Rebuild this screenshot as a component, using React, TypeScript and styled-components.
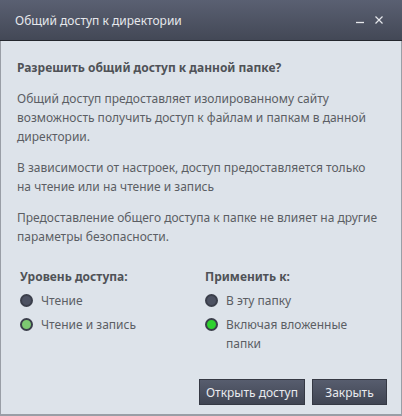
import styled, { createGlobalStyle } from 'styled-components';

const GlobalStyle = createGlobalStyle`
  html, body {
    margin: 0;
    padding: 0;
    background: #dde3ea;
  }
  * {
    box-sizing: border-box;
  }
`;

const Window = styled.div`
  width: 402px;
  height: 416px;
  display: flex;
  flex-direction: column;
  font-family: "Noto Sans", "Open Sans", sans-serif;
  font-size: 12px;
  background: #dde3ea;
  border: 1px solid #999ea6;
  border-top: none;
  border-bottom-width: 2px;
`;

const TitleBar = styled.div`
  height: 41px;
  flex: none;
  display: flex;
  align-items: center;
  padding: 0 19px 0 15px;
  margin: 0 -1px;
  background: linear-gradient(#5a6072, #434856);
  border-bottom: 1px solid #24272e;
  color: #e6e8ec;
`;

const Title = styled.div`
  flex: 1;
  font-size: 12px;
`;

const Controls = styled.div`
  display: flex;
  align-items: center;
  gap: 11px;
`;

const Body = styled.div`
  flex: 1;
  display: flex;
  flex-direction: column;
  padding: 17px 18px 0 16px;
  color: #5b5e64;
`;

const Heading = styled.div`
  font-weight: 700;
  color: #4f5257;
  line-height: 19px;
`;

const Para = styled.p`
  margin: 12px 0 0;
  line-height: 19px;
`;

const Options = styled.div`
  display: grid;
  grid-template-columns: 185px 165px;
  padding-left: 3px;
  margin-top: 21px;
`;

const Column = styled.div`
  display: flex;
  flex-direction: column;
`;

const Label = styled.div`
  font-weight: 700;
  color: #4f5257;
  line-height: 19px;
  margin-bottom: 5px;
`;

const Option = styled.div`
  display: flex;
  align-items: flex-start;
  gap: 8px;
  line-height: 19px;
  margin-bottom: 5px;
  padding-right: 20px;
`;

const Radio = styled.span<{ $on?: string }>`
  flex: none;
  width: 13px;
  height: 13px;
  margin-top: 3px;
  border-radius: 50%;
  border: 2px solid #3b3f4b;
  background: ${(p) => p.$on ?? '#4d5262'};
`;

const Footer = styled.div`
  margin-top: auto;
  display: flex;
  justify-content: flex-end;
  gap: 7px;
  padding: 0 14px 9px 0;
`;

const Button = styled.button`
  height: 26px;
  min-width: 75px;
  padding: 0 6px;
  font-family: inherit;
  font-size: 12px;
  color: #e8eaee;
  background: linear-gradient(#575d6e, #404553);
  border: 1px solid #353944;
  border-radius: 0;
`;

function App(): JSX.Element {
  return (
    <>
      <GlobalStyle />
      <Window>
        <TitleBar>
          <Title>Общий доступ к директории</Title>
          <Controls>
            <svg width="8" height="10" viewBox="0 0 8 10">
              <path d="M0 7.5h8" stroke="#e6e8ec" strokeWidth="1.3" />
            </svg>
            <svg width="8" height="8" viewBox="0 0 8 8">
              <path d="M0.5 0.5l7 7M7.5 0.5l-7 7" stroke="#e6e8ec" strokeWidth="1.2" />
            </svg>
          </Controls>
        </TitleBar>
        <Body>
          <Heading>Разрешить общий доступ к данной папке?</Heading>
          <Para>
            Общий доступ предоставляет изолированному сайту возможность получить доступ к
            файлам и папкам в данной директории.
          </Para>
          <Para>
            В зависимости от настроек, доступ предоставляется только
            <br />
            на чтение или на чтение и запись
          </Para>
          <Para>
            Предоставление общего доступа к папке не влияет на другие параметры безопасности.
          </Para>
          <Options>
            <Column>
              <Label>Уровень доступа:</Label>
              <Option>
                <Radio />
                Чтение
              </Option>
              <Option>
                <Radio $on="#7dc971" />
                Чтение и запись
              </Option>
            </Column>
            <Column>
              <Label>Применить к:</Label>
              <Option>
                <Radio />
                В эту папку
              </Option>
              <Option>
                <Radio $on="#2fd12f" />
                Включая вложенные папки
              </Option>
            </Column>
          </Options>
        </Body>
        <Footer>
          <Button>Открыть доступ</Button>
          <Button>Закрыть</Button>
        </Footer>
      </Window>
    </>
  );
}

export default App;
